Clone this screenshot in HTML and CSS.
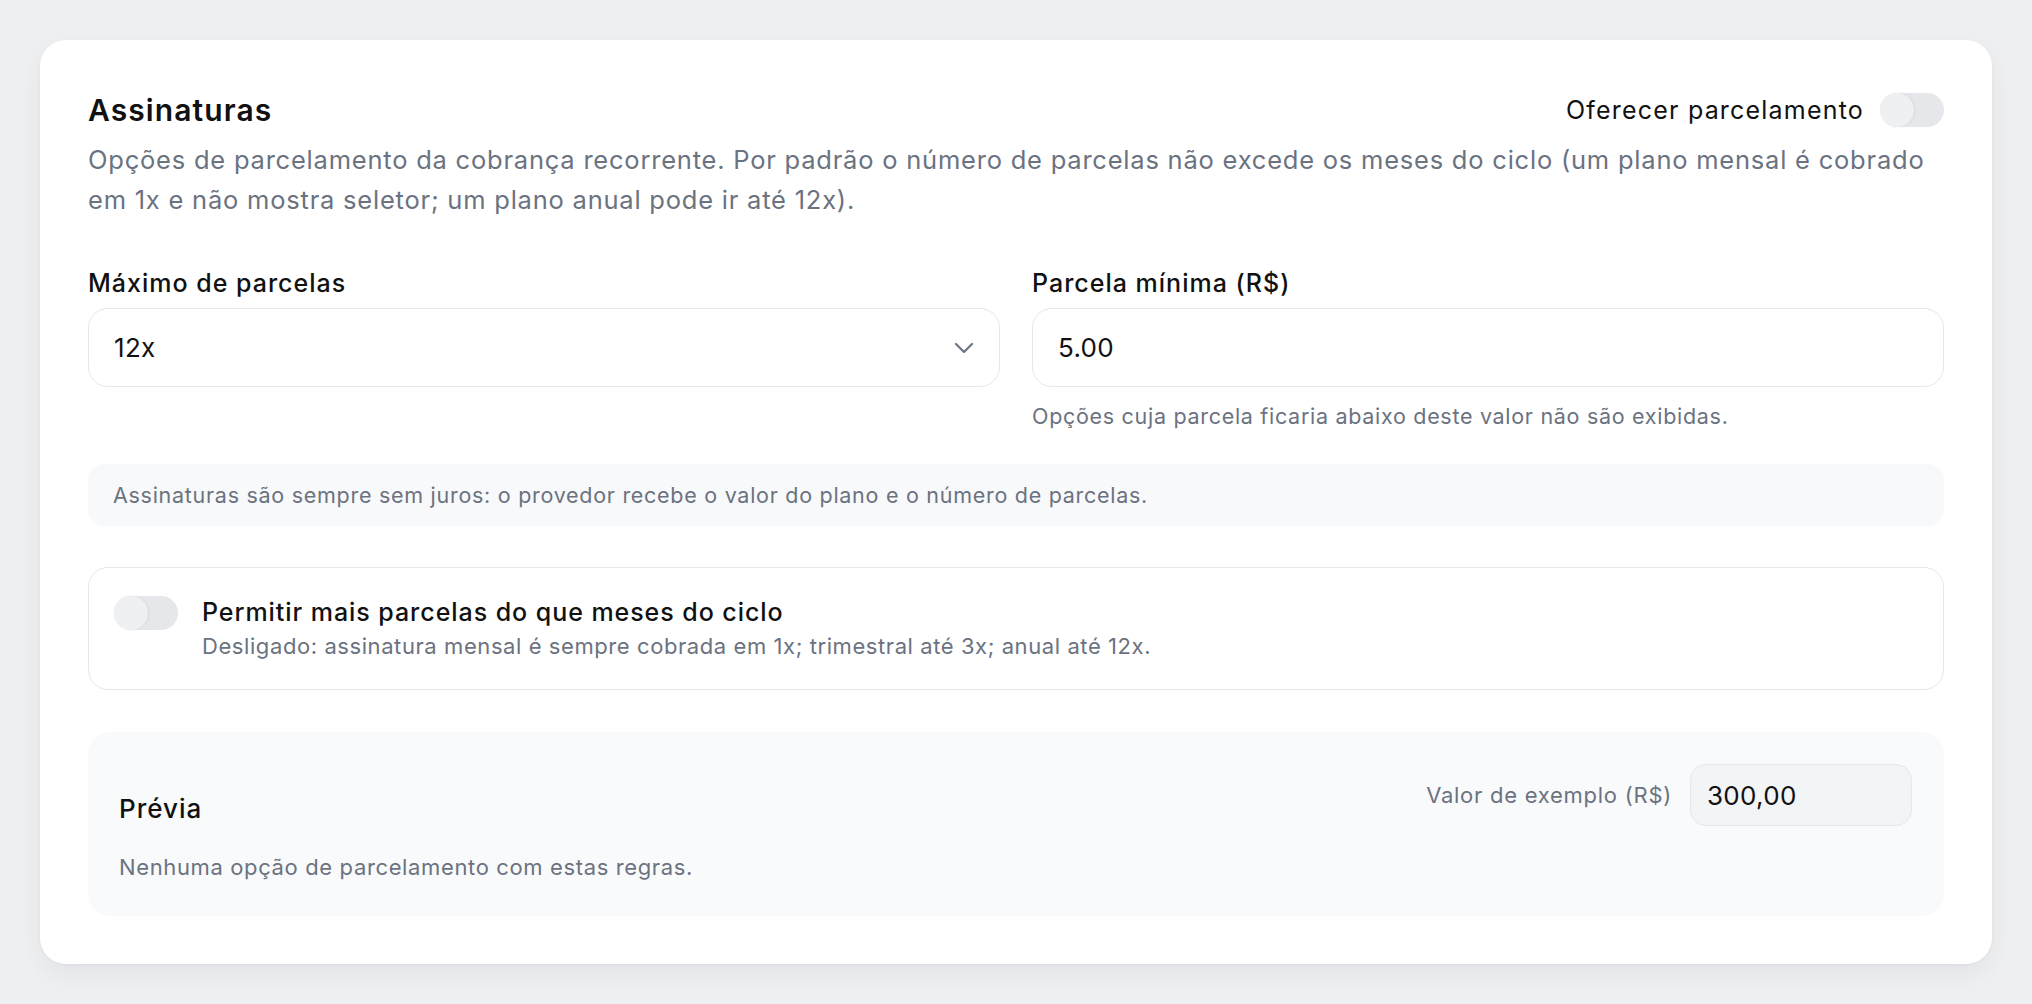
FILE: index.html
```html
<!DOCTYPE html>
<html lang="pt-BR">
<head>
<meta charset="utf-8">
<title>Assinaturas</title>
<link rel="stylesheet" href="styles.css">
</head>
<body>
<main class="card">
  <header class="card-head">
    <h2 class="title">Assinaturas</h2>
    <label class="head-toggle">
      <span>Oferecer parcelamento</span>
      <span class="switch"><span class="knob"></span></span>
    </label>
  </header>
  <p class="desc">Opções de parcelamento da cobrança recorrente. Por padrão o número de parcelas não excede os meses do ciclo (um plano mensal é cobrado em 1x e não mostra seletor; um plano anual pode ir até 12x).</p>

  <div class="fields">
    <div class="field">
      <div class="label">Máximo de parcelas</div>
      <div class="control select">
        <span>12x</span>
        <svg class="chev" width="20" height="12" viewBox="0 0 20 12" fill="none"><path d="M2 2l8 8 8-8" stroke="#6b7280" stroke-width="2.2" stroke-linecap="round" stroke-linejoin="round"/></svg>
      </div>
    </div>
    <div class="field">
      <div class="label">Parcela mínima (R$)</div>
      <input class="control" type="text" value="5.00">
      <div class="hint">Opções cuja parcela ficaria abaixo deste valor não são exibidas.</div>
    </div>
  </div>

  <div class="info">Assinaturas são sempre sem juros: o provedor recebe o valor do plano e o número de parcelas.</div>

  <div class="opt">
    <span class="switch"><span class="knob"></span></span>
    <div class="opt-text">
      <div class="opt-title">Permitir mais parcelas do que meses do ciclo</div>
      <div class="opt-sub">Desligado: assinatura mensal é sempre cobrada em 1x; trimestral até 3x; anual até 12x.</div>
    </div>
  </div>

  <section class="preview">
    <div class="preview-head">
      <div class="preview-title">Prévia</div>
      <label class="sample">
        <span>Valor de exemplo (R$)</span>
        <input class="sample-input" type="text" value="300,00">
      </label>
    </div>
    <div class="preview-empty">Nenhuma opção de parcelamento com estas regras.</div>
  </section>
</main>
</body>
</html>
```
FILE: styles.css
```css
* { box-sizing: border-box; }
html, body { margin: 0; }
body {
  background: #eff0f2;
  font-family: Inter, "Noto Sans", sans-serif;
  color: #111827;
  padding: 40px;
}
.card {
  background: #ffffff;
  border-radius: 26px;
  box-shadow: 0 10px 30px rgba(17, 24, 39, 0.06), 0 1px 3px rgba(17, 24, 39, 0.04);
  padding: 48px 48px 48px;
}
.card-head {
  display: flex;
  align-items: center;
  justify-content: space-between;
  height: 44px;
}
.title {
  margin: 0;
  font-size: 30px;
  font-weight: 600;
  letter-spacing: 1.1px;
  color: #111111;
}
.head-toggle {
  display: flex;
  align-items: center;
  gap: 16px;
  font-size: 25px;
  letter-spacing: 1.2px;
  color: #111111;
}
.switch {
  display: inline-block;
  width: 64px;
  height: 34px;
  border-radius: 17px;
  background: #e5e7eb;
  flex: none;
  position: relative;
}
.knob {
  position: absolute;
  left: 0;
  top: 0;
  width: 34px;
  height: 34px;
  border-radius: 50%;
  background: #eef0f2;
  box-shadow: 1px 0 3px rgba(0, 0, 0, 0.06);
}
.desc {
  margin: 8px 0 0;
  font-size: 25.5px;
  letter-spacing: 0.78px;
  line-height: 40px;
  color: #6b7280;
}
.fields {
  display: grid;
  grid-template-columns: 1fr 1fr;
  gap: 32px;
  margin-top: 46px;
}
.label {
  font-size: 25px;
  font-weight: 500;
  letter-spacing: 1px;
  line-height: 34px;
  color: #111111;
}
.control {
  display: flex;
  align-items: center;
  justify-content: space-between;
  width: 100%;
  height: 79px;
  margin-top: 8px;
  padding: 0 25px;
  border: 1.5px solid #e5e7eb;
  border-radius: 20px;
  background: #fff;
  font-family: inherit;
  font-size: 26px;
  letter-spacing: 0.3px;
  color: #111111;
  outline: none;
}
.chev { flex: none; }
.hint {
  margin-top: 15px;
  font-size: 21.5px;
  letter-spacing: 0.7px;
  line-height: 28px;
  color: #6b7280;
}
.info {
  margin-top: 34px;
  height: 62px;
  display: flex;
  align-items: center;
  padding: 0 25px;
  background: #f8f9fa;
  border-radius: 16px;
  font-size: 21.5px;
  letter-spacing: 0.72px;
  color: #6b7280;
}
.opt {
  margin-top: 41px;
  display: flex;
  align-items: flex-start;
  gap: 24px;
  padding: 27px 25px 26px;
  border: 1.5px solid #e5e7eb;
  border-radius: 20px;
}
.opt .switch { margin-top: 1px; }
.opt-title {
  font-size: 25px;
  font-weight: 500;
  letter-spacing: 0.95px;
  line-height: 34px;
  color: #111111;
}
.opt-sub {
  font-size: 22px;
  letter-spacing: 0.58px;
  line-height: 34px;
  color: #6b7280;
}
.preview {
  margin-top: 42px;
  background: #f9fafb;
  border-radius: 22px;
  padding: 32px 32px 34px 31px;
}
.preview-head {
  display: flex;
  align-items: flex-end;
  justify-content: space-between;
}
.preview-title {
  font-size: 26px;
  font-weight: 500;
  letter-spacing: 1px;
  line-height: 34px;
  color: #111111;
}
.sample {
  display: flex;
  align-items: center;
  gap: 18px;
  font-size: 22px;
  letter-spacing: 0.74px;
  color: #6b7280;
}
.sample-input {
  width: 222px;
  height: 62px;
  padding: 0 16px;
  border: 1.5px solid #e5e7eb;
  border-radius: 16px;
  background: #f3f4f6;
  font-family: inherit;
  font-size: 26px;
  letter-spacing: 0.3px;
  color: #111111;
  outline: none;
}
.preview-empty {
  margin-top: 26px;
  font-size: 22px;
  letter-spacing: 0.63px;
  line-height: 30px;
  color: #6b7280;
}
```
